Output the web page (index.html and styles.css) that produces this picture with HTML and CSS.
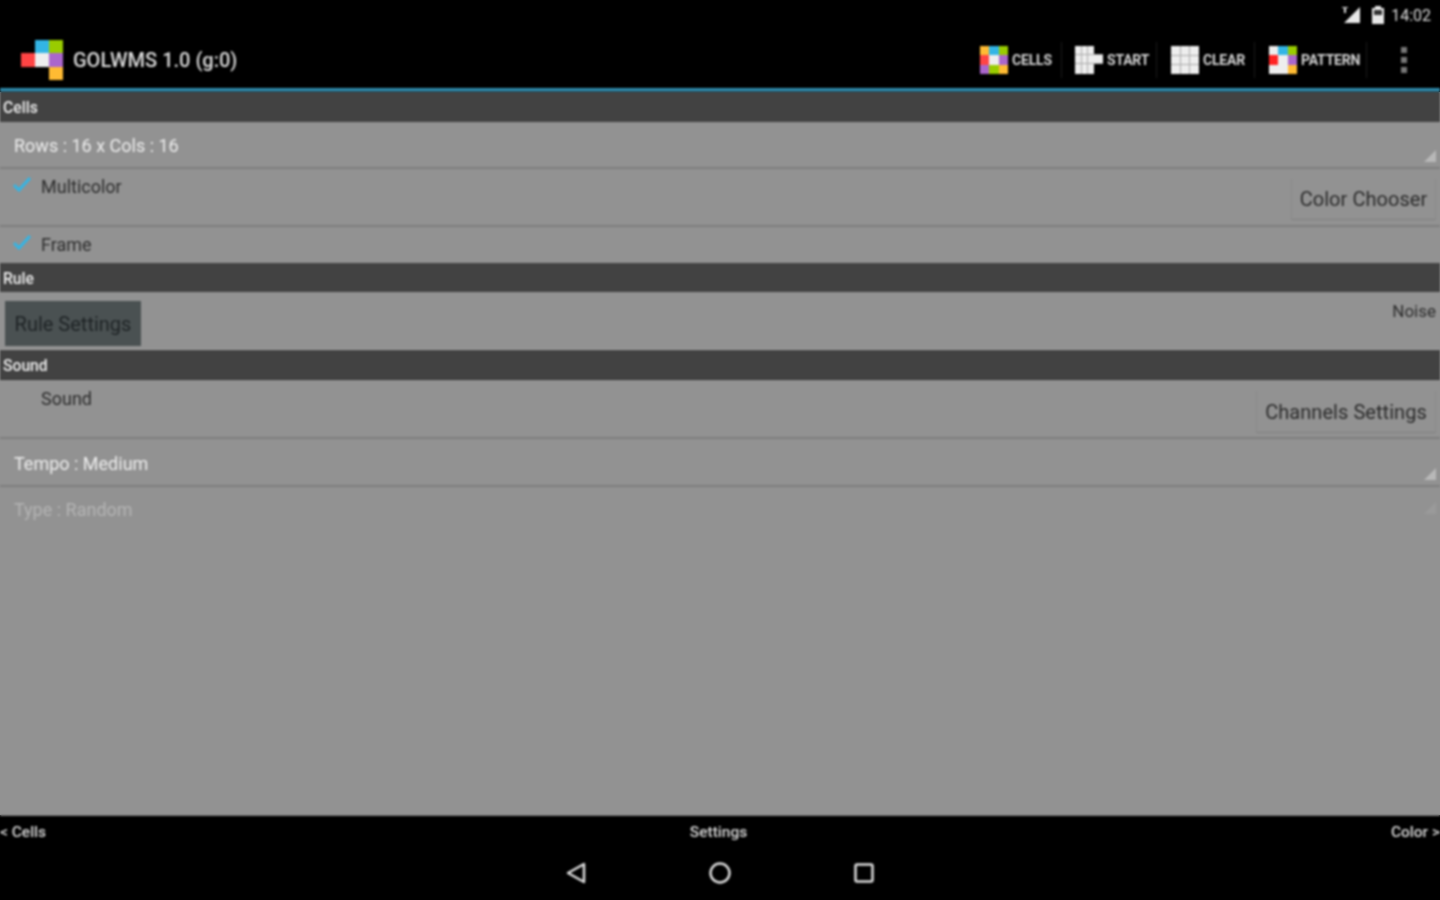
FILE: index.html
```html
<!DOCTYPE html>
<html lang="en">
<head>
<meta charset="utf-8">
<title>GOLWMS</title>
<link rel="stylesheet" href="styles.css">
</head>
<body>
<div class="screen">
  <header class="top">
    <div class="status">
      <svg class="sig" viewBox="0 0 20 18" width="20" height="18"><path d="M19 1V17H3Z" fill="#e8e8e8"/><path d="M1 1h6v1H5v5H3V2H1z" fill="#ddd"/></svg>
      <svg class="bat" viewBox="0 0 14 18" width="14" height="18"><path d="M4 0h6v2h3v16H1V2h3z" fill="#e8e8e8"/><rect x="3" y="4" width="8" height="5" fill="#333"/></svg>
      <span class="time">14:02</span>
    </div>
    <div class="actionbar">
      <svg class="logo" viewBox="0 0 42 40" width="42" height="40">
        <rect x="14" y="0" width="14" height="13" fill="#33b5e5"/><rect x="28" y="0" width="14" height="13" fill="#99cc00"/>
        <rect x="0" y="13" width="14" height="14" fill="#ff4444"/><rect x="14" y="13" width="14" height="14" fill="#eeeeee"/><rect x="28" y="13" width="14" height="14" fill="#aa66cc"/>
        <rect x="28" y="27" width="14" height="13" fill="#ffbb33"/>
      </svg>
      <span class="apptitle">GOLWMS 1.0 (g:0)</span>
      <nav class="actions">
        <div class="act act-cells">
          <svg class="ico" viewBox="0 0 3 3" width="28" height="28" shape-rendering="crispEdges"><rect width="1" height="1" fill="#ffbb33"/><rect x="1" width="1" height="1" fill="#33b5e5"/><rect x="2" width="1" height="1" fill="#99cc00"/><rect y="1" width="1" height="1" fill="#ff4444"/><rect x="1" y="1" width="1" height="1" fill="#eee"/><rect x="2" y="1" width="1" height="1" fill="#aa66cc"/><rect y="2" width="1" height="1" fill="#aa66cc"/><rect x="1" y="2" width="1" height="1" fill="#99cc00"/><rect x="2" y="2" width="1" height="1" fill="#ffbb33"/></svg>
          <span>CELLS</span>
        </div>
        <div class="act act-start">
          <svg class="ico" viewBox="0 0 28 28" width="28" height="28"><path d="M0 0h19v8h9v10h-9v10H0z" fill="#eee"/><path d="M6.500 0v28M12.500 0v28M0 8.500h28M0 17.500h28" stroke="#aaa" stroke-width="1"/></svg>
          <span>START</span>
        </div>
        <div class="act act-clear">
          <svg class="ico" viewBox="0 0 28 28" width="28" height="28"><rect width="28" height="28" fill="#eee"/><path d="M9.500 0v28M18.500 0v28M0 9.500h28M0 18.500h28" stroke="#aaa" stroke-width="1"/></svg>
          <span>CLEAR</span>
        </div>
        <div class="act act-pattern">
          <svg class="ico" viewBox="0 0 3 3" width="28" height="28" shape-rendering="crispEdges"><rect width="3" height="3" fill="#eee"/><rect x="1" width="1" height="1" fill="#33b5e5"/><rect x="2" width="1" height="1" fill="#99cc00"/><rect y="1" width="1" height="1" fill="#ff2222"/><rect x="2" y="1" width="1" height="1" fill="#aa66cc"/><rect x="2" y="2" width="1" height="1" fill="#ffbb33"/></svg>
          <span>PATTERN</span>
        </div>
        <div class="overflow"><i></i><i></i><i></i></div>
      </nav>
    </div>
    <div class="blueline"></div>
  </header>

  <main class="content">
    <div class="section">Cells</div>
    <div class="spinner spinner-rows"><span>Rows : 16 x Cols : 16</span><b class="corner"></b></div>
    <div class="row row-multi">
      <svg class="check" viewBox="0 0 20 16" width="20" height="16"><path d="M2 9l5 5L18 2" fill="none" stroke="#33b5e5" stroke-width="3"/></svg>
      <span class="label">Multicolor</span>
      <div class="flatbtn btn-color">Color Chooser</div>
    </div>
    <div class="row row-frame">
      <svg class="check" viewBox="0 0 20 16" width="20" height="16"><path d="M2 9l5 5L18 2" fill="none" stroke="#33b5e5" stroke-width="3"/></svg>
      <span class="label">Frame</span>
    </div>
    <div class="section section-rule">Rule</div>
    <div class="row-rule">
      <div class="rulebtn">Rule Settings</div>
      <span class="noise">Noise</span>
    </div>
    <div class="section section-sound">Sound</div>
    <div class="row row-sound">
      <span class="check-empty"></span>
      <span class="label">Sound</span>
      <div class="flatbtn btn-channels">Channels Settings</div>
    </div>
    <div class="spinner spinner-tempo"><span>Tempo : Medium</span><b class="corner"></b></div>
    <div class="spinner spinner-type"><span>Type : Random</span><b class="corner faint"></b></div>
  </main>

  <footer class="bottom">
    <div class="pager"><span>&lt; Cells</span><span>Settings</span><span>Color &gt;</span></div>
    <div class="navbar">
      <svg viewBox="0 0 24 24" width="24" height="24"><path d="M20 3V21L4 12Z" fill="none" stroke="#ddd" stroke-width="2.500" stroke-linejoin="round"/></svg>
      <svg viewBox="0 0 24 24" width="24" height="24"><circle cx="12" cy="12" r="9.500" fill="none" stroke="#ddd" stroke-width="2.500"/></svg>
      <svg viewBox="0 0 24 24" width="24" height="24"><rect x="3.500" y="3.500" width="17" height="17" rx="1.500" fill="none" stroke="#ddd" stroke-width="2.500"/></svg>
    </div>
  </footer>
</div>
</body>
</html>
```
FILE: styles.css
```css
* { box-sizing: border-box; }
html, body { margin: 0; height: 100%; }
body { font-family: Roboto, "Liberation Sans", sans-serif; overflow: hidden; background: linear-gradient(#000 92px, #929292 92px, #929292 815px, #000 815px); }
.screen { width: 1440px; height: 900px; display: flex; flex-direction: column; background: #000; filter: blur(0.8px); }

.top { height: 92px; flex: none; display: flex; flex-direction: column; }
.status { height: 30px; display: flex; align-items: center; justify-content: flex-end; padding-right: 9px; color: #ddd; font-size: 16px; }
.sig { margin-right: 10px; }
.bat { margin-right: 6px; }
.actionbar { height: 58px; display: flex; align-items: center; padding: 2px 0 0 21px; }
.logo { margin-right: 10px; }
.apptitle { color: #dcdcdc; font-size: 20px; font-weight: 500; }
.actions { margin-left: auto; display: flex; align-items: center; height: 100%; }
.act { display: flex; align-items: center; gap: 4px; height: 36px; color: #d4d4d4; font-size: 14px; font-weight: 700; border-right: 1px solid #1c1c1c; }
.act span { letter-spacing: -0.2px; }
.act-cells { width: 83px; padding-left: 1px; }
.act-start { width: 95px; padding-left: 13px; }
.act-clear { width: 98px; padding-left: 14px; }
.act-pattern { width: 112px; padding-left: 14px; }
.overflow { width: 73px; display: flex; flex-direction: column; align-items: center; gap: 4px; }
.overflow i { width: 6px; height: 6px; background: #777; }
.blueline { height: 4px; background: #2f8cae; border-bottom: 1px solid #1d4a5a; }

.content { flex: 1; display: flex; flex-direction: column; background: #929292; }
.section { height: 30px; flex: none; background: #424242; color: #efefef; font-size: 15.7px; font-weight: 500; line-height: 31px; padding-left: 3px; }
.section-rule { height: 29px; }
.section-sound { height: 30px; border-bottom: 1px solid #333; }

.spinner { flex: none; position: relative; border-bottom: 2px solid #7d7d7d; padding-left: 14px; color: #ededed; font-size: 18px; font-weight: 400; }
.spinner-rows { height: 47px; padding-top: 13px; }
.spinner-tempo { height: 48px; padding-top: 14px; }
.spinner-type { height: 49px; padding-top: 12px; border-bottom: 0; color: #b4b4b4; }
.corner { position: absolute; right: 4px; bottom: 5px; width: 0; height: 0; border-left: 12px solid transparent; border-bottom: 12px solid #b8b8b8; }
.corner.faint { border-bottom-color: #9a9a9a; bottom: 22px; }

.row { flex: none; display: flex; position: relative; padding-left: 13px; }
.check { flex: none; margin-top: 7px; margin-left: -1px; }
.check-empty { flex: none; width: 19px; height: 16px; }
.label { margin-left: 9px; color: #2c2c2c; font-size: 18px; padding-top: 7px; }
.row-multi { height: 58px; border-bottom: 2px solid #7d7d7d; }
.row-frame { height: 36px; }
.row-sound { height: 59px; border-bottom: 2px solid #7d7d7d; }
.row-sound .label { padding-top: 8px; }
.flatbtn { position: absolute; right: 4px; color: #2a2a2a; font-size: 20px; letter-spacing: 0.05px; display: flex; align-items: center; justify-content: center; border-bottom: 1px solid #808080; border-right: 1px solid #8a8a8a; border-left: 1px solid #8a8a8a; }
.btn-color { top: 10px; width: 145px; height: 41px; }
.btn-channels { top: 11px; width: 180px; height: 42px; }

.row-rule { flex: none; height: 58px; position: relative; display: flex; align-items: flex-start; justify-content: space-between; padding: 9px 4px 0 5px; border-bottom: 1px solid #a2a2a2; }
.rulebtn { width: 136px; height: 45px; background: #4a5152; color: #1e2325; font-size: 20px; display: flex; align-items: center; justify-content: center; }
.noise { color: #2c2c2c; font-size: 17px; }

.bottom { height: 85px; flex: none; display: flex; flex-direction: column; background: #000; border-top: 1px solid #777; }
.pager { height: 32px; display: flex; justify-content: space-between; align-items: center; color: #dadada; font-size: 15.5px; font-weight: 500; }
.navbar { flex: 1; display: flex; justify-content: center; gap: 120px; padding-top: 13px; }
```
